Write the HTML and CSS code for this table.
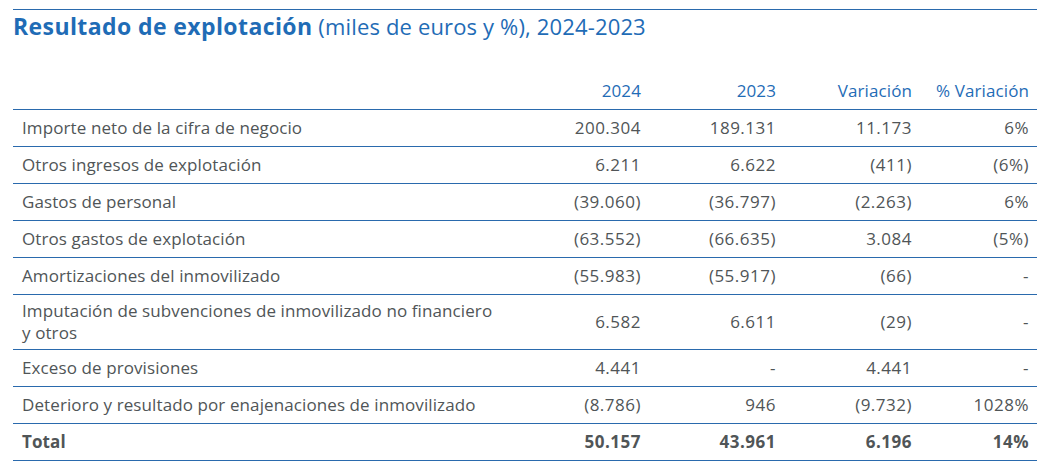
FILE: index.html
```html
<!DOCTYPE html>
<html lang="es">
<head>
<meta charset="utf-8">
<title>Resultado de explotación</title>
<link rel="stylesheet" href="styles.css">
</head>
<body>
<div class="wrap">
  <h1 class="title"><strong>Resultado de explotación</strong> (miles de euros y %), 2024-2023</h1>
  <div class="table">
    <div class="row head">
      <div class="cell label"></div>
      <div class="cell num">2024</div>
      <div class="cell num">2023</div>
      <div class="cell num">Variación</div>
      <div class="cell num">% Variación</div>
    </div>
    <div class="row">
      <div class="cell label">Importe neto de la cifra de negocio</div>
      <div class="cell num">200.304</div>
      <div class="cell num">189.131</div>
      <div class="cell num">11.173</div>
      <div class="cell num">6%</div>
    </div>
    <div class="row">
      <div class="cell label">Otros ingresos de explotación</div>
      <div class="cell num">6.211</div>
      <div class="cell num">6.622</div>
      <div class="cell num">(411)</div>
      <div class="cell num">(6%)</div>
    </div>
    <div class="row">
      <div class="cell label">Gastos de personal</div>
      <div class="cell num">(39.060)</div>
      <div class="cell num">(36.797)</div>
      <div class="cell num">(2.263)</div>
      <div class="cell num">6%</div>
    </div>
    <div class="row">
      <div class="cell label">Otros gastos de explotación</div>
      <div class="cell num">(63.552)</div>
      <div class="cell num">(66.635)</div>
      <div class="cell num">3.084</div>
      <div class="cell num">(5%)</div>
    </div>
    <div class="row">
      <div class="cell label">Amortizaciones del inmovilizado</div>
      <div class="cell num">(55.983)</div>
      <div class="cell num">(55.917)</div>
      <div class="cell num">(66)</div>
      <div class="cell num">-</div>
    </div>
    <div class="row">
      <div class="cell label">Imputación de subvenciones de inmovilizado no financiero<br>y otros</div>
      <div class="cell num">6.582</div>
      <div class="cell num">6.611</div>
      <div class="cell num">(29)</div>
      <div class="cell num">-</div>
    </div>
    <div class="row">
      <div class="cell label">Exceso de provisiones</div>
      <div class="cell num">4.441</div>
      <div class="cell num">-</div>
      <div class="cell num">4.441</div>
      <div class="cell num">-</div>
    </div>
    <div class="row">
      <div class="cell label">Deterioro y resultado por enajenaciones de inmovilizado</div>
      <div class="cell num">(8.786)</div>
      <div class="cell num">946</div>
      <div class="cell num">(9.732)</div>
      <div class="cell num">1028%</div>
    </div>
    <div class="row total">
      <div class="cell label">Total</div>
      <div class="cell num">50.157</div>
      <div class="cell num">43.961</div>
      <div class="cell num">6.196</div>
      <div class="cell num">14%</div>
    </div>
  </div>
</div>
</body>
</html>
```

FILE: styles.css
```css
html, body {
  margin: 0;
  padding: 0;
  background: #ffffff;
}

body {
  font-family: "Open Sans", "Noto Sans", sans-serif;
  color: #505557;
}

.wrap {
  margin: 9px 0 0 13px;
  width: 1024px;
  border-top: 1px solid #2a6aad;
}

.title {
  margin: 0;
  padding-top: 2px;
  font-size: 22px;
  line-height: 28px;
  font-weight: 400;
  letter-spacing: 0.15px;
  color: #1f6cb6;
}

.title strong {
  font-size: 23px;
  font-weight: 700;
  letter-spacing: 0.4px;
}

.table {
  margin-top: 33px;
}

.row {
  display: grid;
  grid-template-columns: 501px 135px 135px 136px 117px;
  align-items: center;
  min-height: 37px;
  box-sizing: border-box;
  border-bottom: 1px solid #2a6aad;
  font-size: 17px;
  line-height: 22px;
  letter-spacing: 0.1px;
}

.cell {
  padding: 5px 8px;
}

.cell.label {
  padding-left: 9px;
}

.cell.num {
  text-align: right;
}

.row:not(.head) .cell.num {
  letter-spacing: 0.5px;
}

.head .cell {
  color: #1f6cb6;
}

.total .cell {
  font-weight: 700;
}
```
